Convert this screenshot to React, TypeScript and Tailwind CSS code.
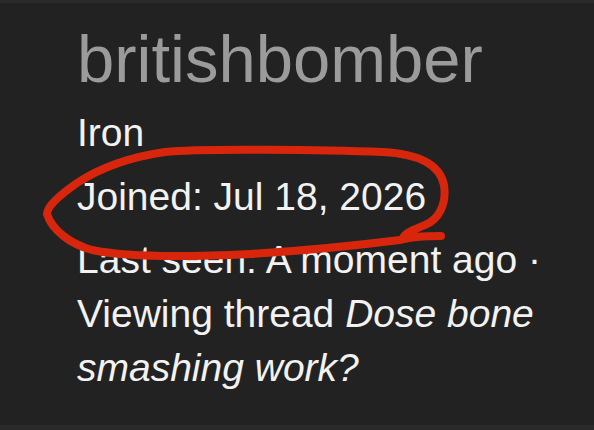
export default function App() {
  return (
    <div
      className="relative flex h-[430px] w-[594px] flex-col overflow-hidden bg-[#222222]"
      style={{ fontFamily: '"Liberation Sans", Arial, Helvetica, sans-serif' }}
    >
      <div className="h-[3px] w-full bg-[#2b2b2b]" />
      <div className="flex flex-1 flex-col pl-[77px] pr-[14px] pt-[22px]">
        <h1 className="text-[67px] leading-[67px] font-normal text-[#9b9b9b]">britishbomber</h1>
        <div className="mt-[14px] text-[39px] leading-[54px] text-[#f2f2f2]">Iron</div>
        <div className="mt-[10px] text-[39px] leading-[54px] text-[#f2f2f2]">Joined: Jul 18, 2026</div>
        <p className="mt-[9px] text-[39px] leading-[54px] text-[#f2f2f2]">
          Last seen: A moment ago · Viewing thread <em className="italic">Dose bone smashing work?</em>
        </p>
      </div>
      <div className="h-[5px] w-full bg-[#2a2a2a]" />

      {/* hand-drawn marker loop around the join date */}
      <svg
        className="pointer-events-none absolute left-0 top-0"
        width="594"
        height="430"
        viewBox="0 0 594 430"
        fill="none"
      >
        <path
          d="M 441 236
             C 425 236, 410 237, 400 240
             C 360 245, 300 251, 250 254
             C 190 257, 130 258, 92 250
             C 70 244, 52 230, 47 214
             C 47 206, 60 195, 77 183
             C 100 168, 130 157, 165 152
             C 200 148, 330 150, 383 152
             C 420 154, 440 165, 444 185
             C 447 205, 438 220, 425 225
             C 415 229, 405 233, 403 238"
          stroke="#d8260c"
          strokeWidth="8"
          strokeLinecap="round"
          strokeLinejoin="round"
        />
      </svg>
    </div>
  );
}
